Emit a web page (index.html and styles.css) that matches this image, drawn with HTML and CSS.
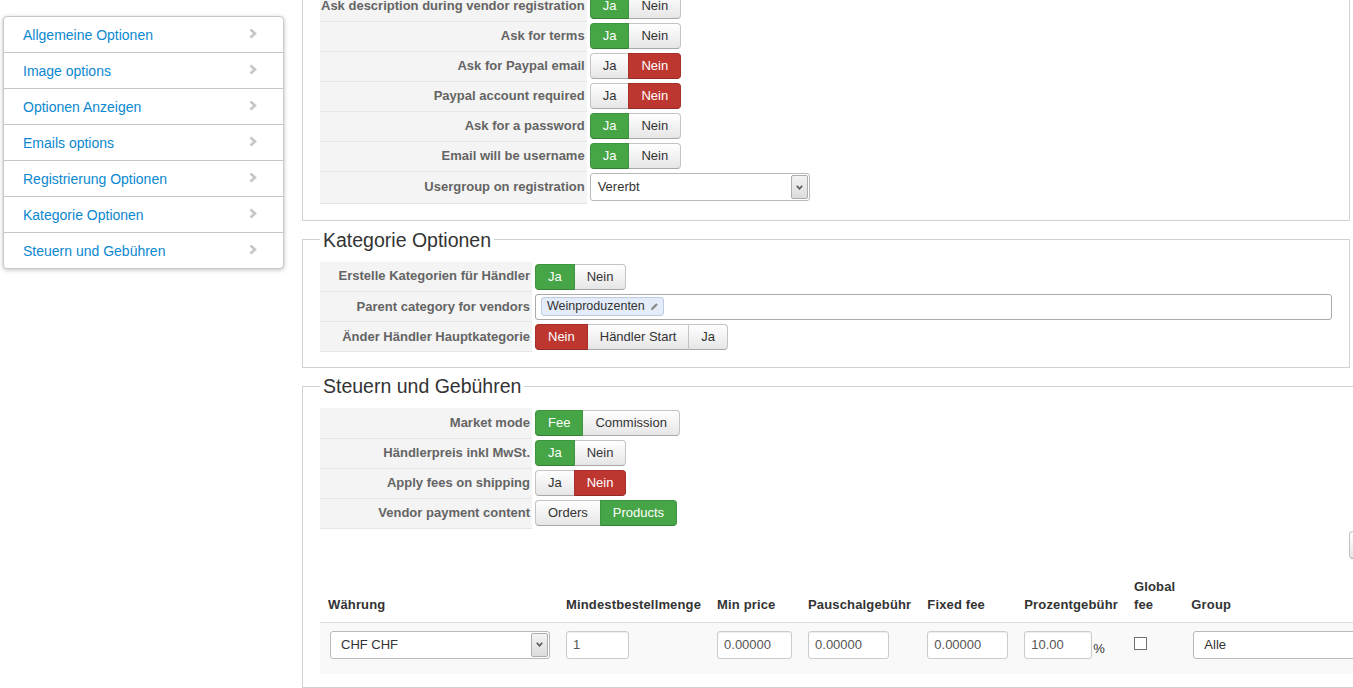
FILE: index.html
```html
<!DOCTYPE html>
<html lang="de">
<head>
  <meta charset="UTF-8">
  <meta name="viewport" content="width=device-width, initial-scale=1.0">
  <title>Händler Konfiguration</title>
  <link rel="stylesheet" href="styles.css">
</head>
<body>
  <div class="page">

    <ul class="side-nav">
      <li><a href="#">Allgemeine Optionen</a><svg class="chev" width="8" height="11" viewBox="0 0 8 11"><polyline points="1.5,1.5 6,5.5 1.5,9.5"/></svg></li>
      <li><a href="#">Image options</a><svg class="chev" width="8" height="11" viewBox="0 0 8 11"><polyline points="1.5,1.5 6,5.5 1.5,9.5"/></svg></li>
      <li><a href="#">Optionen Anzeigen</a><svg class="chev" width="8" height="11" viewBox="0 0 8 11"><polyline points="1.5,1.5 6,5.5 1.5,9.5"/></svg></li>
      <li><a href="#">Emails options</a><svg class="chev" width="8" height="11" viewBox="0 0 8 11"><polyline points="1.5,1.5 6,5.5 1.5,9.5"/></svg></li>
      <li><a href="#">Registrierung Optionen</a><svg class="chev" width="8" height="11" viewBox="0 0 8 11"><polyline points="1.5,1.5 6,5.5 1.5,9.5"/></svg></li>
      <li><a href="#">Kategorie Optionen</a><svg class="chev" width="8" height="11" viewBox="0 0 8 11"><polyline points="1.5,1.5 6,5.5 1.5,9.5"/></svg></li>
      <li><a href="#">Steuern und Gebühren</a><svg class="chev" width="8" height="11" viewBox="0 0 8 11"><polyline points="1.5,1.5 6,5.5 1.5,9.5"/></svg></li>
    </ul>

    <div class="main">

      <fieldset class="panel">
        <legend>Registrierung Optionen</legend>
        <table class="admintable">
          <tr>
            <td class="key">Ask description during vendor registration</td>
            <td><span class="btn-group"><span class="btn btn-success">Ja</span><span class="btn">Nein</span></span></td>
          </tr>
          <tr>
            <td class="key">Ask for terms</td>
            <td><span class="btn-group"><span class="btn btn-success">Ja</span><span class="btn">Nein</span></span></td>
          </tr>
          <tr>
            <td class="key">Ask for Paypal email</td>
            <td><span class="btn-group"><span class="btn">Ja</span><span class="btn btn-danger">Nein</span></span></td>
          </tr>
          <tr>
            <td class="key">Paypal account required</td>
            <td><span class="btn-group"><span class="btn">Ja</span><span class="btn btn-danger">Nein</span></span></td>
          </tr>
          <tr>
            <td class="key">Ask for a password</td>
            <td><span class="btn-group"><span class="btn btn-success">Ja</span><span class="btn">Nein</span></span></td>
          </tr>
          <tr>
            <td class="key">Email will be username</td>
            <td><span class="btn-group"><span class="btn btn-success">Ja</span><span class="btn">Nein</span></span></td>
          </tr>
          <tr>
            <td class="key">Usergroup on registration</td>
            <td>
              <div class="select select-user">
                <span class="select-value">Vererbt</span>
                <span class="select-arrow"><svg width="7" height="5" viewBox="0 0 7 5"><polyline points="0.8,0.8 3.5,3.8 6.2,0.8"/></svg></span>
              </div>
            </td>
          </tr>
        </table>
      </fieldset>

      <fieldset class="panel panel-cat">
        <legend>Kategorie Optionen</legend>
        <table class="admintable">
          <tr>
            <td class="key">Erstelle Kategorien für Händler</td>
            <td><span class="btn-group"><span class="btn btn-success">Ja</span><span class="btn">Nein</span></span></td>
          </tr>
          <tr>
            <td class="key">Parent category for vendors</td>
            <td>
              <div class="chosen">
                <span class="chip">Weinproduzenten
                  <svg width="9" height="9" viewBox="0 0 9 9"><path d="M0.8 8.2 L1.6 5.8 L6.2 1.2 L7.8 2.8 L3.2 7.4 Z"/></svg>
                </span>
              </div>
            </td>
          </tr>
          <tr>
            <td class="key">Änder Händler Hauptkategorie</td>
            <td><span class="btn-group"><span class="btn btn-danger">Nein</span><span class="btn">Händler Start</span><span class="btn">Ja</span></span></td>
          </tr>
        </table>
      </fieldset>

      <fieldset class="panel panel-fees">
        <legend>Steuern und Gebühren</legend>
        <table class="admintable">
          <tr>
            <td class="key">Market mode</td>
            <td><span class="btn-group"><span class="btn btn-success">Fee</span><span class="btn">Commission</span></span></td>
          </tr>
          <tr>
            <td class="key">Händlerpreis inkl MwSt.</td>
            <td><span class="btn-group"><span class="btn btn-success">Ja</span><span class="btn">Nein</span></span></td>
          </tr>
          <tr>
            <td class="key">Apply fees on shipping</td>
            <td><span class="btn-group"><span class="btn">Ja</span><span class="btn btn-danger">Nein</span></span></td>
          </tr>
          <tr>
            <td class="key">Vendor payment content</td>
            <td><span class="btn-group"><span class="btn">Orders</span><span class="btn btn-success">Products</span></span></td>
          </tr>
        </table>

        <div class="add-row">
          <span class="btn btn-add">Neu</span>
        </div>

        <table class="fees">
          <thead>
            <tr>
              <th>Währung</th>
              <th>Mindestbestellmenge</th>
              <th>Min price</th>
              <th>Pauschalgebühr</th>
              <th>Fixed fee</th>
              <th>Prozentgebühr</th>
              <th class="narrow">Global fee</th>
              <th>Group</th>
            </tr>
          </thead>
          <tbody>
            <tr>
              <td>
                <div class="select select-currency">
                  <span class="select-value">CHF CHF</span>
                  <span class="select-arrow"><svg width="7" height="5" viewBox="0 0 7 5"><polyline points="0.8,0.8 3.5,3.8 6.2,0.8"/></svg></span>
                </div>
              </td>
              <td><input class="field w-qty" type="text" value="1"></td>
              <td><input class="field w-min" type="text" value="0.00000"></td>
              <td><input class="field w-fee" type="text" value="0.00000"></td>
              <td><input class="field w-fee" type="text" value="0.00000"></td>
              <td><input class="field w-pct" type="text" value="10.00"><span class="pct">%</span></td>
              <td><input class="check" type="checkbox"></td>
              <td>
                <div class="select select-group">
                  <span class="select-value">Alle</span>
                  <span class="select-arrow"><svg width="7" height="5" viewBox="0 0 7 5"><polyline points="0.8,0.8 3.5,3.8 6.2,0.8"/></svg></span>
                </div>
              </td>
            </tr>
          </tbody>
        </table>
      </fieldset>

    </div>
  </div>
</body>
</html>
```

FILE: styles.css
```css
*{
  box-sizing: border-box;
}
html, body{
  overflow: hidden;
}
body{
  margin: 0;
  background: #fff;
  color: #333;
  font-family: "Liberation Sans", Arial, sans-serif;
  font-size: 13px;
  line-height: 18px;
}
.page{
  display: flex;
  align-items: flex-start;
}

/* left menu */
.side-nav{
  flex: 0 0 281px;
  margin: 16px 0 0 3px;
  padding: 0;
  list-style: none;
  background: #fff;
  border: 1px solid #c8c8c8;
  border-radius: 4px;
  box-shadow: 0 1px 4px rgba(0,0,0,.25);
}
.side-nav li{
  display: flex;
  align-items: center;
  justify-content: space-between;
  padding: 9px 26px 7px 19px;
  border-top: 1px solid #c8c8c8;
  font-size: 14px;
  line-height: 19px;
}
.side-nav li:first-child{
  border-top: 0;
}
.side-nav a{
  color: #0b88cf;
  text-decoration: none;
}
.chev{
  margin-top: -4px;
}
.chev polyline{
  fill: none;
  stroke: #c6c6c6;
  stroke-width: 2.6;
}

/* content */
.main{
  flex: 0 0 1048px;
  min-width: 0;
  margin: -43px 0 0 18px;
}
.panel{
  margin: 0 0 7px;
  padding: 0 17px 16px;
  border: 1px solid #d2d2d2;
}
.panel legend{
  padding: 0 3px;
  font-size: 19.5px;
  line-height: 24px;
  color: #333;
}
.panel-cat{
  padding-bottom: 15px;
  margin-bottom: 6px;
}
.panel-fees{
  padding-bottom: 13px;
}
.admintable{
  width: 100%;
  margin-top: 10px;
  border-collapse: collapse;
}
.admintable td{
  padding: 2px 0 2px 3px;
  vertical-align: middle;
}
.admintable td.key{
  width: 212px;
  white-space: nowrap;
  padding: 2px 2px 2px 1px;
  background: #f4f4f4;
  border-bottom: 1px solid #e6e6e6;
  text-align: right;
  font-weight: bold;
  color: #646464;
}

/* toggle buttons */
.btn-group{
  display: inline-flex;
  vertical-align: middle;
}
.btn{
  display: inline-block;
  padding: 3px 12px;
  font-size: 13px;
  line-height: 18px;
  color: #333;
  background: linear-gradient(#ffffff, #e6e6e6);
  border: 1px solid #c4c4c4;
  border-bottom-color: #a8a8a8;
  white-space: nowrap;
}
.btn-group .btn + .btn{
  margin-left: -1px;
}
.btn-group .btn:first-child{
  border-radius: 4px 0 0 4px;
}
.btn-group .btn:last-child{
  border-radius: 0 4px 4px 0;
}
.btn-success{
  position: relative;
  color: #fff;
  background: #46a546;
  border-color: #3e953e;
  border-bottom-color: #357f35;
}
.btn-danger{
  position: relative;
  color: #fff;
  background: #bd362f;
  border-color: #a8302a;
  border-bottom-color: #932a25;
}

/* select boxes */
.select{
  display: flex;
  height: 28px;
  border: 1px solid #b9b9b9;
  border-radius: 3px;
  background: #fff;
  color: #333;
}
.select-value{
  flex: 1;
  padding: 4px 7px;
  line-height: 18px;
}
.select-arrow{
  display: flex;
  align-items: center;
  justify-content: center;
  width: 17px;
  margin: 1px;
  border: 1px solid #adadad;
  border-radius: 2px;
  background: linear-gradient(#f3f3f3, #dcdcdc);
}
.select-arrow polyline{
  fill: none;
  stroke: #555;
  stroke-width: 1.6;
}
.select-user{
  width: 220px;
}
.select-currency{
  width: 220px;
  margin-left: 2px;
}
.select-currency .select-value,
.select-group .select-value{
  padding-left: 10px;
}
.select-group{
  width: 220px;
  margin-left: 2px;
}

/* chosen tag field */
.chosen{
  height: 26px;
  padding: 2px 5px;
  border: 1px solid #aaa;
  border-radius: 3px;
  background: #fff;
}
.chip{
  display: inline-flex;
  align-items: center;
  gap: 5px;
  height: 19px;
  padding: 0 4px 0 5px;
  font-size: 12.5px;
  color: #333;
  background: #e3ecf8;
  border: 1px solid #bccbe2;
  border-radius: 3px;
}
.chip path{
  fill: #888;
}

/* fees table */
.add-row{
  margin-top: 2px;
  text-align: right;
}
.btn-add{
  height: 28px;
  border-radius: 4px;
  width: 72px;
}
.fees{
  margin-top: 11px;
  border-collapse: collapse;
}
.fees th{
  padding: 8px;
  text-align: left;
  vertical-align: bottom;
  white-space: nowrap;
  letter-spacing: 0.15px;
  color: #333;
  border-bottom: 1px solid #dddddd;
}
.fees th.narrow{
  width: 1px;
  white-space: normal;
}
.fees td{
  padding: 8px 8px 1px;
  vertical-align: top;
  background: #f9f9f9;
  white-space: nowrap;
}
.fees td .select,
.fees td .field{
  margin-bottom: 14px;
}
.field{
  height: 28px;
  padding: 4px 6px;
  font-family: "Liberation Sans", Arial, sans-serif;
  font-size: 13px;
  color: #555;
  border: 1px solid #cccccc;
  border-radius: 3px;
  box-shadow: inset 0 1px 1px rgba(0,0,0,.075);
  vertical-align: top;
}
.w-qty{ width: 63px; }
.w-min{ width: 75px; }
.w-fee{ width: 81px; }
.w-pct{ width: 68px; }
.pct{
  display: inline-block;
  margin: 9px 0 0 1px;
  color: #333;
}
.check{
  appearance: none;
  width: 13px;
  height: 13px;
  margin: 6px 0 0;
  border: 1px solid #707070;
  background: #fff;
}
```
